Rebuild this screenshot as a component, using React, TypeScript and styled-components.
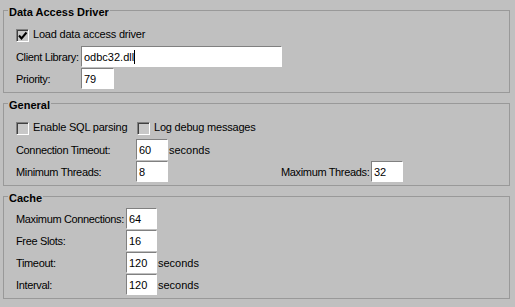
import React from "react";
import styled, { createGlobalStyle } from "styled-components";

const Global = createGlobalStyle`
  html, body { margin: 0; padding: 0; background: #c0c0c0; }
  body {
    font-family: "Liberation Sans", Arial, sans-serif;
    font-size: 11px;
    color: #000;
  }
`;

const Page = styled.div`
  display: flex;
  flex-direction: column;
  gap: 2px;
  width: 515px;
  height: 307px;
  box-sizing: border-box;
  padding: 2px 5px 0 3px;
`;

const Group = styled.fieldset`
  margin: 0;
  min-width: 0;
  border: 1px solid #999;
  padding: 0 4px 2px 4px;
`;

const Title = styled.legend`
  margin: 0;
  padding: 4px 1px 0;
  font-weight: bold;
  font-size: 11px;
  line-height: 13px;
`;

const Body = styled.div`
  display: flex;
  flex-direction: column;
  padding: 3px 0 0 8px;
`;

const CheckRow = styled.div<{ $cols: string }>`
  display: grid;
  grid-template-columns: ${(p) => p.$cols};
  height: 24px;
  box-sizing: border-box;
  padding-top: 7px;
`;

const CheckItem = styled.div`
  display: flex;
  align-items: flex-start;
  gap: 4px;
`;

const Box = styled.span`
  display: block;
  width: 13px;
  height: 13px;
  box-sizing: border-box;
  border: 1px solid;
  border-color: #808080 #ffffff #ffffff #808080;
  box-shadow: inset 1px 1px 0 #404040;
  background: #c8c8c8;
  flex: none;
`;

const CheckText = styled.span`
  line-height: 13px;
  margin-top: -1px;
  letter-spacing: -0.2px;
  white-space: nowrap;
`;

const Row = styled.div`
  display: flex;
  align-items: flex-start;
  height: 22px;
`;

const Label = styled.span<{ $w: number; $ml?: number }>`
  width: ${(p) => p.$w}px;
  margin-left: ${(p) => p.$ml ?? 0}px;
  padding-top: 5px;
  line-height: 13px;
  letter-spacing: -0.35px;
  white-space: nowrap;
  flex: none;
`;

const Input = styled.div<{ $w: number }>`
  width: ${(p) => p.$w}px;
  height: 21px;
  box-sizing: border-box;
  flex: none;
  background: #fff;
  border: 1px solid;
  border-color: #808080 #ffffff #ffffff #808080;
  padding: 4px 0 0 2px;
  line-height: 13px;
  white-space: nowrap;
  overflow: hidden;
  display: flex;
  align-items: flex-start;
`;

const Caret = styled.span`
  display: inline-block;
  width: 1px;
  height: 14px;
  margin-top: -1px;
  background: #000;
`;

const Unit = styled.span`
  padding-top: 5px;
  margin-left: 1px;
  line-height: 13px;
  white-space: nowrap;
`;

function Check({ label, checked }: { label: string; checked?: boolean }) {
  return (
    <CheckItem>
      <Box>
        {checked && (
          <svg width="11" height="11" viewBox="0 0 11 11" style={{ display: "block" }}>
            <path d="M2 5.5 L4.5 8.5 L9.5 2.5" fill="none" stroke="#000" strokeWidth="2" />
          </svg>
        )}
      </Box>
      <CheckText>{label}</CheckText>
    </CheckItem>
  );
}

function Field({
  label,
  labelW,
  value,
  w = 32,
  unit,
  caret,
}: {
  label: string;
  labelW: number;
  value: string;
  w?: number;
  unit?: string;
  caret?: boolean;
}) {
  return (
    <>
      <Label $w={labelW}>{label}</Label>
      <Input $w={w}>
        {value}
        {caret && <Caret />}
      </Input>
      {unit && <Unit>{unit}</Unit>}
    </>
  );
}

export default function App() {
  return (
    <>
      <Global />
      <Page>
        <Group>
          <Title>Data Access Driver</Title>
          <Body>
            <CheckRow $cols="auto">
              <Check label="Load data access driver" checked />
            </CheckRow>
            <Row>
              <Field label="Client Library:" labelW={65} value="odbc32.dll" w={201} caret />
            </Row>
            <Row>
              <Field label="Priority:" labelW={65} value="79" w={33} />
            </Row>
          </Body>
        </Group>

        <Group>
          <Title>General</Title>
          <Body>
            <CheckRow $cols="121px auto">
              <Check label="Enable SQL parsing" />
              <Check label="Log debug messages" />
            </CheckRow>
            <Row>
              <Field label="Connection Timeout:" labelW={120} value="60" unit="seconds" />
            </Row>
            <Row>
              <Field label="Minimum Threads:" labelW={120} value="8" />
              <Label $w={90} $ml={113}>Maximum Threads:</Label>
              <Input $w={32}>32</Input>
            </Row>
          </Body>
        </Group>

        <Group>
          <Title>Cache</Title>
          <Body>
            <Row>
              <Field label="Maximum Connections:" labelW={110} value="64" w={31} />
            </Row>
            <Row>
              <Field label="Free Slots:" labelW={110} value="16" w={31} />
            </Row>
            <Row>
              <Field label="Timeout:" labelW={110} value="120" w={31} unit="seconds" />
            </Row>
            <Row>
              <Field label="Interval:" labelW={110} value="120" w={31} unit="seconds" />
            </Row>
          </Body>
        </Group>
      </Page>
    </>
  );
}
